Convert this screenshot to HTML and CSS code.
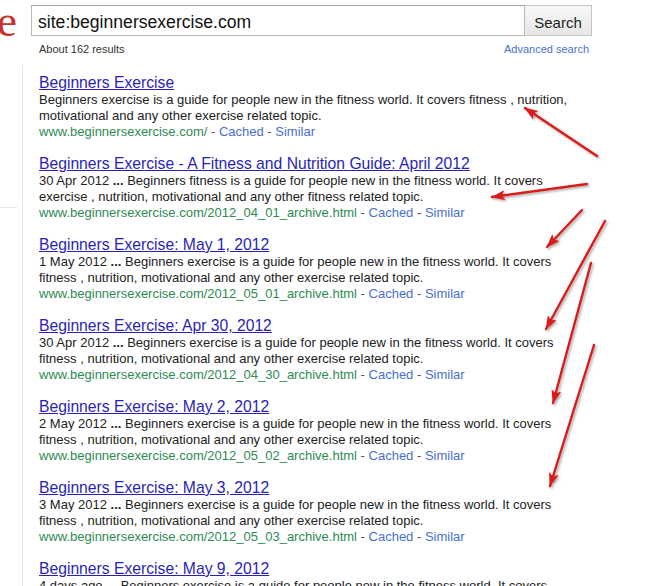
FILE: index.html
```html
<!DOCTYPE html>
<html lang="en">
<head>
    <meta charset="UTF-8">
    <title>site:beginnersexercise.com - Google Search</title>
    <link rel="stylesheet" href="styles.css">
</head>
<body>
    <!-- Search header -->
    <header class="top">
        <div class="logo-tail">e</div>
        <form class="search-form">
            <input class="search-input" type="text" value="site:beginnersexercise.com">
            <button class="search-btn" type="button">Search</button>
        </form>
    </header>

    <div class="stats-row">
        <span class="stats">About 162 results</span>
        <a class="adv" href="#">Advanced search</a>
    </div>

    <div class="page">
        <aside class="leftnav">
            <div class="leftnav-rule"></div>
        </aside>

        <main class="results">
            <div class="result">
                <a class="title" href="#">Beginners Exercise</a>
                <div class="snippet">Beginners exercise is a guide for people new in the fitness world. It covers fitness , nutrition, motivational and any other exercise related topic.</div>
                <div class="meta"><span class="url">www.beginnersexercise.com/</span> - <a href="#">Cached</a> - <a href="#">Similar</a></div>
            </div>

            <div class="result">
                <a class="title" href="#">Beginners Exercise - A Fitness and Nutrition Guide: April 2012</a>
                <div class="snippet">30 Apr 2012 <b>...</b> Beginners fitness is a guide for people new in the fitness world. It covers exercise , nutrition, motivational and any other fitness related topic.</div>
                <div class="meta"><span class="url">www.beginnersexercise.com/2012_04_01_archive.html</span> - <a href="#">Cached</a> - <a href="#">Similar</a></div>
            </div>

            <div class="result">
                <a class="title" href="#">Beginners Exercise: May 1, 2012</a>
                <div class="snippet">1 May 2012 <b>...</b> Beginners exercise is a guide for people new in the fitness world. It covers fitness , nutrition, motivational and any other exercise related topic.</div>
                <div class="meta"><span class="url">www.beginnersexercise.com/2012_05_01_archive.html</span> - <a href="#">Cached</a> - <a href="#">Similar</a></div>
            </div>

            <div class="result">
                <a class="title" href="#">Beginners Exercise: Apr 30, 2012</a>
                <div class="snippet">30 Apr 2012 <b>...</b> Beginners exercise is a guide for people new in the fitness world. It covers fitness , nutrition, motivational and any other exercise related topic.</div>
                <div class="meta"><span class="url">www.beginnersexercise.com/2012_04_30_archive.html</span> - <a href="#">Cached</a> - <a href="#">Similar</a></div>
            </div>

            <div class="result">
                <a class="title" href="#">Beginners Exercise: May 2, 2012</a>
                <div class="snippet">2 May 2012 <b>...</b> Beginners exercise is a guide for people new in the fitness world. It covers fitness , nutrition, motivational and any other exercise related topic.</div>
                <div class="meta"><span class="url">www.beginnersexercise.com/2012_05_02_archive.html</span> - <a href="#">Cached</a> - <a href="#">Similar</a></div>
            </div>

            <div class="result">
                <a class="title" href="#">Beginners Exercise: May 3, 2012</a>
                <div class="snippet">3 May 2012 <b>...</b> Beginners exercise is a guide for people new in the fitness world. It covers fitness , nutrition, motivational and any other exercise related topic.</div>
                <div class="meta"><span class="url">www.beginnersexercise.com/2012_05_03_archive.html</span> - <a href="#">Cached</a> - <a href="#">Similar</a></div>
            </div>

            <div class="result">
                <a class="title" href="#">Beginners Exercise: May 9, 2012</a>
                <div class="snippet">4 days ago <b>...</b> Beginners exercise is a guide for people new in the fitness world. It covers fitness , nutrition, motivational and any other exercise related topic.</div>
                <div class="meta"><span class="url">www.beginnersexercise.com/2012_05_09_archive.html</span> - <a href="#">Cached</a> - <a href="#">Similar</a></div>
            </div>
        </main>
    </div>

    <!-- Red annotation arrows drawn over the screenshot -->
    <svg class="arrows" width="661" height="586" viewBox="0 0 661 586">
        <defs>
            <marker id="head" viewBox="0 0 14 10" refX="13" refY="5" markerWidth="14" markerHeight="10" markerUnits="userSpaceOnUse" orient="auto">
                <path d="M0,0 L14,5 L0,10 L3,5 z" fill="#d81c1c"/>
            </marker>
            <filter id="shade" x="-20%" y="-20%" width="140%" height="140%">
                <feDropShadow dx="1.5" dy="1.5" stdDeviation="1.2" flood-color="#000" flood-opacity="0.35"/>
            </filter>
        </defs>
        <g stroke="#d81c1c" stroke-width="2.4" stroke-linecap="round" fill="none" marker-end="url(#head)" filter="url(#shade)">
            <line x1="597" y1="156" x2="525" y2="108"/>
            <line x1="587" y1="184" x2="492" y2="197"/>
            <line x1="582" y1="210" x2="547" y2="247"/>
            <line x1="605" y1="221" x2="546" y2="329"/>
            <line x1="591" y1="263" x2="553" y2="403"/>
            <line x1="594" y1="345" x2="550" y2="486"/>
        </g>
    </svg>
</body>
</html>
```

FILE: styles.css
```css
/* General */
body {
    margin: 0;
    font-family: Arial, "Liberation Sans", sans-serif;
    background-color: #fff;
    color: #222;
    position: relative;
    overflow: hidden;
    height: 586px;
}

a {
    text-decoration: none;
}

/* Header with search box */
.top {
    display: flex;
    align-items: flex-start;
    padding-top: 5px;
    height: 31px;
}

.logo-tail {
    width: 31px;
    margin-left: -8px;
    margin-top: -2px;
    font-family: "Liberation Serif", serif;
    font-size: 45px;
    line-height: 36px;
    color: #c8302a;
    overflow: hidden;
    text-indent: 5px;
}

.search-form {
    display: flex;
    margin-left: 8px;
}

.search-input {
    box-sizing: border-box;
    width: 494px;
    height: 31px;
    margin: 0;
    padding: 3px 6px 0;
    border: 1px solid #b9b9b9;
    border-top-color: #a0a0a0;
    font-family: Arial, "Liberation Sans", sans-serif;
    font-size: 17.6px;
    color: #111;
    outline: none;
}

.search-btn {
    box-sizing: border-box;
    width: 67px;
    height: 31px;
    margin: 0;
    padding: 3px 0 0;
    border: 1px solid #c6c6c6;
    border-left: none;
    background: linear-gradient(#f8f8f8, #e6e6e6);
    font-family: Arial, "Liberation Sans", sans-serif;
    font-size: 15px;
    color: #222;
}

/* Result count row */
.stats-row {
    display: flex;
    justify-content: space-between;
    width: 550px;
    margin-left: 39px;
    padding-top: 7px;
    height: 22px;
    font-size: 11px;
}

.stats {
    color: #333;
}

.adv {
    color: #4a6fd0;
}

/* Page body */
.page {
    display: flex;
}

.leftnav {
    width: 22px;
    border-right: 1px solid #e6e6e6;
    height: 540px;
}

.leftnav-rule {
    margin-top: 142px;
    width: 17px;
    border-top: 1px solid #e6e6e6;
}

.results {
    width: 540px;
    padding: 9px 0 0 16px;
}

.result {
    margin-bottom: 15px;
}

.title {
    display: block;
    font-size: 15.7px;
    line-height: 18px;
    color: #2a1fb6;
    text-decoration: underline;
}

.snippet {
    font-size: 13px;
    line-height: 16px;
    color: #222;
}

.meta {
    font-size: 13px;
    line-height: 16px;
    color: #555;
}

.meta a {
    color: #4a6fd0;
}

.url {
    color: #2e8a52;
}

/* Annotation overlay */
.arrows {
    position: absolute;
    left: 0;
    top: 0;
    pointer-events: none;
}
```
